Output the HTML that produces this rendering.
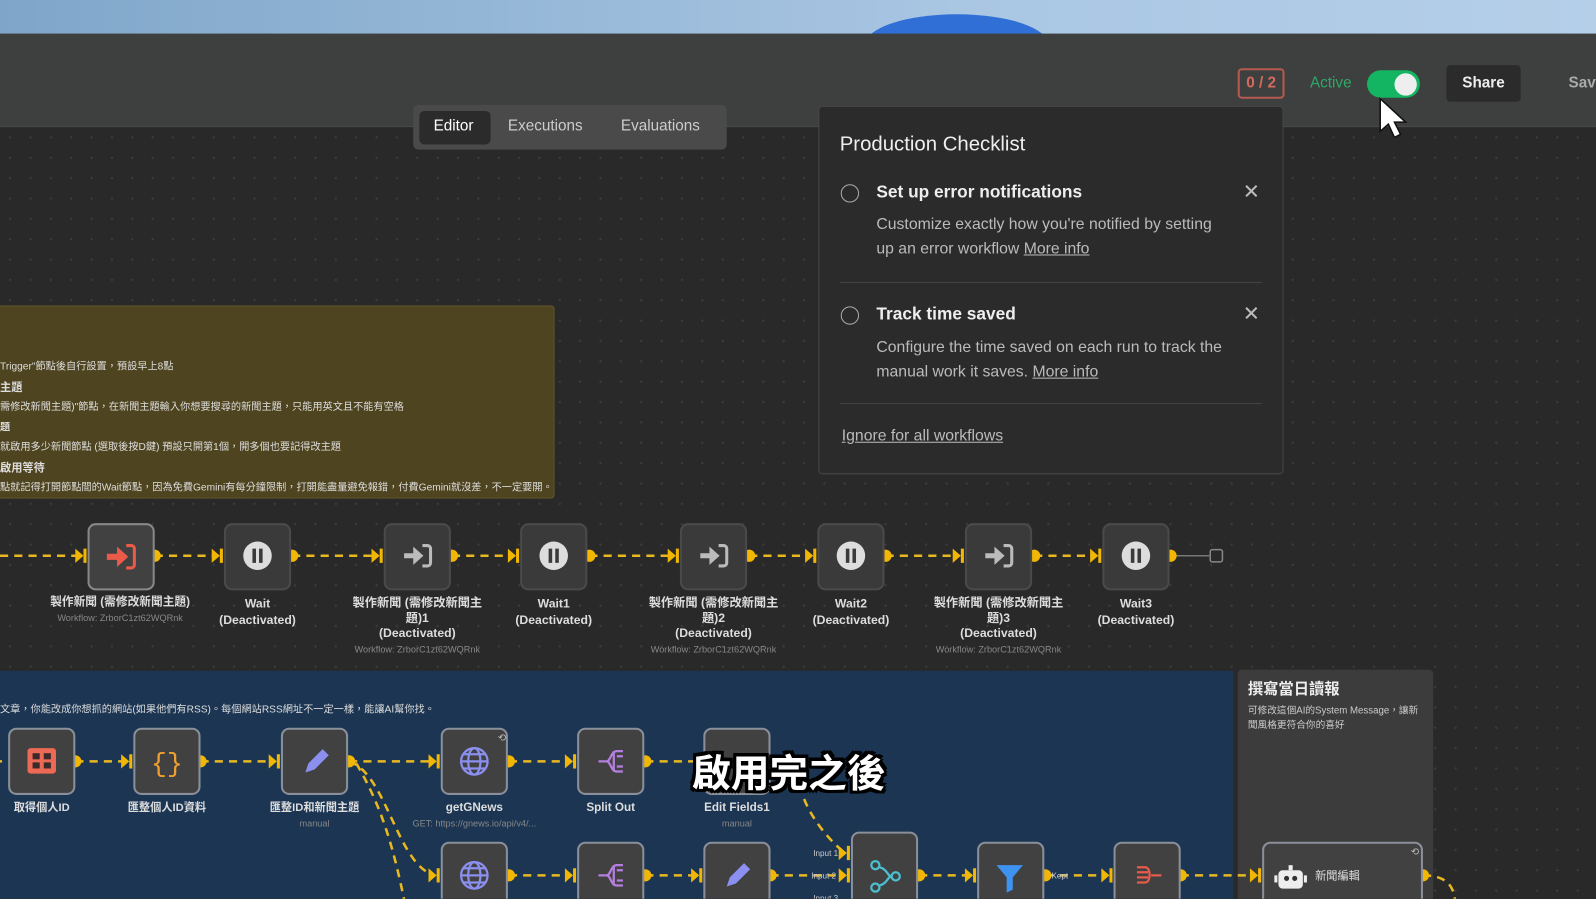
<!DOCTYPE html>
<html><head><meta charset="utf-8"><style>
*{margin:0;padding:0;box-sizing:border-box}
body{width:1596px;height:898px;overflow:hidden;background:#292929;font-family:"Liberation Sans","Noto Sans CJK TC",sans-serif;color:#ddd}
#w{position:absolute;left:0;top:0;width:1568px;height:883px;transform:scale(1.017857);transform-origin:0 0;overflow:hidden}
.abs{position:absolute}
.canvas{left:0;top:125px;width:1568px;height:760px;background-color:#292929;background-image:radial-gradient(#3c3c3c 1px,transparent 1.2px);background-size:20px 20px}
.node{position:absolute;width:66px;height:66px;background:#3a3a3a;border:2px solid #4a4a4a;border-radius:8px}
.nb{background:#414141;border:2px solid #8a8f99}
.lbl{position:absolute;width:170px;text-align:center;font-size:11.5px;color:#ddd;line-height:15px;font-weight:bold}
.sub{font-size:9px;color:#888;font-weight:normal}
.cn{font-size:10px;color:#ddd;line-height:20px;white-space:nowrap}
</style></head><body><div id="w">
<div class="abs" style="left:0;top:0;width:1568px;height:34px;background:linear-gradient(90deg,#7fa6c9,#a9c6e3 60%,#b5cfe9)"></div>
<div class="abs" style="left:850px;top:14px;width:180px;height:60px;border-radius:50%;background:#2f6fd6"></div>
<div class="abs" style="left:0;top:33px;width:1568px;height:92px;background:#3e3f3f;border-bottom:1px solid #4a4a4a"></div>
<div class="canvas abs"></div>

<div class="abs" style="left:406px;top:103px;width:308px;height:44px;background:#4a4a4a;border-radius:5px"></div>
<div class="abs" style="left:412px;top:109px;width:70px;height:33px;background:#2b2b2b;border-radius:5px"></div>
<div class="abs" style="left:426px;top:115px;font-size:15px;color:#fff">Editor</div>
<div class="abs" style="left:499px;top:115px;font-size:15px;color:#ccc">Executions</div>
<div class="abs" style="left:610px;top:115px;font-size:15px;color:#ccc">Evaluations</div>

<div class="abs" style="left:1216px;top:67px;width:46px;height:30px;border:2px solid #b55a50;border-radius:4px;color:#d56b5f;font-size:15px;font-weight:bold;text-align:center;line-height:26px">0 / 2</div>
<div class="abs" style="left:1287px;top:73px;font-size:15px;color:#2ea866">Active</div>
<div class="abs" style="left:1343px;top:69px;width:52px;height:27px;border-radius:14px;background:#13b562"></div>
<div class="abs" style="left:1370px;top:72px;width:22px;height:22px;border-radius:50%;background:#eee"></div>
<div class="abs" style="left:1421px;top:64px;width:73px;height:36px;border-radius:4px;background:#2b2b2b;color:#eee;font-size:15px;font-weight:bold;text-align:center;line-height:36px">Share</div>
<div class="abs" style="left:1541px;top:73px;font-size:15px;color:#aaa;font-weight:bold">Sav</div>

<div class="abs" style="left:0;top:300px;width:545px;height:190px;background:#4f4420;border:1px solid #665a2c;border-left:none;border-radius:0 4px 4px 0"></div>
<div class="abs cn" style="left:0;top:351px">Trigger"節點後自行設置，預設早上8點</div>
<div class="abs cn" style="left:0;top:371px;font-weight:bold;font-size:11px">主題</div>
<div class="abs cn" style="left:0;top:391px">需修改新聞主題)"節點，在新聞主題輸入你想要搜尋的新聞主題，只能用英文且不能有空格</div>
<div class="abs cn" style="left:0;top:411px;font-weight:bold">題</div>
<div class="abs cn" style="left:0;top:430px">就啟用多少新聞節點 (選取後按D鍵) 預設只開第1個，開多個也要記得改主題</div>
<div class="abs cn" style="left:0;top:450px;font-weight:bold;font-size:11px">啟用等待</div>
<div class="abs cn" style="left:0;top:470px">點就記得打開節點間的Wait節點，因為免費Gemini有每分鐘限制，打開能盡量避免報錯，付費Gemini就沒差，不一定要開。</div>

<div class="abs" style="left:0;top:659px;width:1212px;height:239px;background:#1b3552"></div>
<div class="abs cn" style="left:0;top:688px">文章，你能改成你想抓的網站(如果他們有RSS)。每個網站RSS網址不一定一樣，能讓AI幫你找。</div>
<div class="abs" style="left:1216px;top:658px;width:192px;height:240px;background:#3c3c3c;border-radius:4px"></div>
<div class="abs" style="left:1226px;top:666px;font-size:15px;font-weight:bold;color:#eee">撰寫當日讀報</div>
<div class="abs" style="left:1226px;top:692px;font-size:9.5px;color:#ccc;line-height:14px;width:176px">可修改這個AI的System Message，讓新聞風格更符合你的喜好</div>

<svg class="abs" style="left:0;top:0" width="1568" height="898">
<g stroke="#e8b820" stroke-width="2.5" stroke-dasharray="8 6" fill="none">
<path d="M0 546H80M152 546H214M287 546H371M444 546H505M579 546H662M736 546H797M870 546H942M1016 546H1077"/>
<path d="M0 748H2M74 748H125M197 748H270M343 748H427M500 748H561M634 748H685"/>
<path d="M343 748 C380 760,390 850,427 860"/>
<path d="M350 750 C380 800,390 850,400 898"/>
<path d="M500 860H561M634 860H685M757 860H830M903 860H954M1027 860H1088M1160 860H1234M1398 860C1430 860,1430 880,1430 898"/>
<path d="M790 785 C800 810,820 830,830 838"/>
</g>
<line x1="1150" y1="546" x2="1188" y2="546" stroke="#777" stroke-width="1.5"/>
<rect x="1189" y="540" width="12" height="12" rx="2" fill="none" stroke="#888" stroke-width="1.5"/>
<g fill="#f2b705">
<circle cx="152" cy="546" r="6"/><circle cx="287" cy="546" r="6"/><circle cx="444" cy="546" r="6"/><circle cx="579" cy="546" r="6"/><circle cx="736" cy="546" r="6"/><circle cx="870" cy="546" r="6"/><circle cx="1016" cy="546" r="6"/><circle cx="1150" cy="546" r="6"/>
<circle cx="74" cy="748" r="6"/><circle cx="197" cy="748" r="6"/><circle cx="343" cy="748" r="6"/><circle cx="500" cy="748" r="6"/><circle cx="634" cy="748" r="6"/>
<circle cx="500" cy="860" r="6"/><circle cx="634" cy="860" r="6"/><circle cx="757" cy="860" r="6"/><circle cx="903" cy="860" r="6"/><circle cx="1027" cy="860" r="6"/><circle cx="1160" cy="860" r="6"/><circle cx="1398" cy="860" r="6"/>
<path d="M74 539l8 7-8 7zM82 539h3v14h-3zM208 539l8 7-8 7zM216 539h3v14h-3zM365 539l8 7-8 7zM373 539h3v14h-3zM499 539l8 7-8 7zM507 539h3v14h-3zM656 539l8 7-8 7zM664 539h3v14h-3zM791 539l8 7-8 7zM799 539h3v14h-3zM936 539l8 7-8 7zM944 539h3v14h-3zM1071 539l8 7-8 7zM1079 539h3v14h-3z"/>
<path d="M119 741l8 7-8 7zM127 741h3v14h-3zM264 741l8 7-8 7zM272 741h3v14h-3zM421 741l8 7-8 7zM429 741h3v14h-3zM555 741l8 7-8 7zM563 741h3v14h-3z"/>
<path d="M421 853l8 7-8 7zM429 853h3v14h-3zM555 853l8 7-8 7zM563 853h3v14h-3zM679 853l8 7-8 7zM687 853h3v14h-3zM824 853l8 7-8 7zM832 853h3v14h-3zM948 853l8 7-8 7zM956 853h3v14h-3zM1082 853l8 7-8 7zM1090 853h3v14h-3zM1228 853l8 7-8 7zM1236 853h3v14h-3zM824 831l8 7-8 7zM832 831h3v14h-3z"/>
</g>
</svg>

<div class="node nb" style="left:86px;top:514px;border-color:#888"></div>
<svg class="abs" style="left:102px;top:531px" width="34" height="32" viewBox="0 0 34 32"><path d="M3 16h13" stroke="#ec5a4a" stroke-width="6"/><path d="M13 6l11 10-11 10z" fill="#ec5a4a"/><path d="M22 5h5a3 3 0 0 1 3 3v16a3 3 0 0 1-3 3h-5" stroke="#ec5a4a" stroke-width="3" fill="none"/></svg>
<div class="node" style="left:220px;top:514px"></div>
<div class="node" style="left:377px;top:514px"></div>
<div class="node" style="left:511px;top:514px"></div>
<div class="node" style="left:668px;top:514px"></div>
<div class="node" style="left:803px;top:514px"></div>
<div class="node" style="left:948px;top:514px"></div>
<div class="node" style="left:1083px;top:514px"></div>
<svg class="abs" style="left:0;top:0;pointer-events:none" width="1568" height="600">
<g fill="#ddd"><circle cx="253" cy="546" r="14"/><circle cx="544" cy="546" r="14"/><circle cx="836" cy="546" r="14"/><circle cx="1116" cy="546" r="14"/></g>
<g fill="#3a3a3a"><rect x="248" y="539" width="3.5" height="14"/><rect x="254.5" y="539" width="3.5" height="14"/><rect x="539" y="539" width="3.5" height="14"/><rect x="545.5" y="539" width="3.5" height="14"/><rect x="831" y="539" width="3.5" height="14"/><rect x="837.5" y="539" width="3.5" height="14"/><rect x="1111" y="539" width="3.5" height="14"/><rect x="1117.5" y="539" width="3.5" height="14"/></g>
<g fill="#bbb" stroke="#bbb">
<g transform="translate(394,531)"><path d="M3 15h12" stroke-width="5"/><path d="M12 6l10 9-10 9z" stroke="none"/><path d="M21 5h5a3 3 0 0 1 3 3v14a3 3 0 0 1-3 3h-5" stroke-width="3" fill="none"/></g>
<g transform="translate(685,531)"><path d="M3 15h12" stroke-width="5"/><path d="M12 6l10 9-10 9z" stroke="none"/><path d="M21 5h5a3 3 0 0 1 3 3v14a3 3 0 0 1-3 3h-5" stroke-width="3" fill="none"/></g>
<g transform="translate(965,531)"><path d="M3 15h12" stroke-width="5"/><path d="M12 6l10 9-10 9z" stroke="none"/><path d="M21 5h5a3 3 0 0 1 3 3v14a3 3 0 0 1-3 3h-5" stroke-width="3" fill="none"/></g>
</g></svg>
<div class="lbl" style="left:33px;top:585px">製作新聞 (需修改新聞主題)<br><span class="sub">Workflow: ZrborC1zt62WQRnk</span></div>
<div class="lbl" style="left:168px;top:585px;font-size:12px;line-height:16px">Wait<br>(Deactivated)</div>
<div class="lbl" style="left:325px;top:585px;font-size:12px;line-height:15px">製作新聞 (需修改新聞主<br>題)1<br>(Deactivated)<br><span class="sub">Workflow: ZrborC1zt62WQRnk</span></div>
<div class="lbl" style="left:459px;top:585px;font-size:12px;line-height:16px">Wait1<br>(Deactivated)</div>
<div class="lbl" style="left:616px;top:585px;font-size:12px;line-height:15px">製作新聞 (需修改新聞主<br>題)2<br>(Deactivated)<br><span class="sub">Workflow: ZrborC1zt62WQRnk</span></div>
<div class="lbl" style="left:751px;top:585px;font-size:12px;line-height:16px">Wait2<br>(Deactivated)</div>
<div class="lbl" style="left:896px;top:585px;font-size:12px;line-height:15px">製作新聞 (需修改新聞主<br>題)3<br>(Deactivated)<br><span class="sub">Workflow: ZrborC1zt62WQRnk</span></div>
<div class="lbl" style="left:1031px;top:585px;font-size:12px;line-height:16px">Wait3<br>(Deactivated)</div>

<div class="node nb" style="left:8px;top:715px"></div>
<div class="node nb" style="left:131px;top:715px"></div>
<div class="node nb" style="left:276px;top:715px"></div>
<div class="node nb" style="left:433px;top:715px"></div>
<div class="node nb" style="left:567px;top:715px"></div>
<div class="node nb" style="left:691px;top:715px"></div>
<div class="node nb" style="left:433px;top:827px"></div>
<div class="node nb" style="left:567px;top:827px"></div>
<div class="node nb" style="left:691px;top:827px"></div>
<div class="node nb" style="left:836px;top:817px;height:90px"></div>
<div class="node nb" style="left:960px;top:827px"></div>
<div class="node nb" style="left:1094px;top:827px"></div>
<div class="node nb" style="left:1240px;top:827px;width:158px"></div>
<svg class="abs" style="left:0;top:600px" width="1568" height="298">
<g transform="translate(27,135)"><rect width="28" height="25" rx="3" fill="#ec6a55"/><rect x="5" y="5" width="7" height="6" fill="#3a2a2a"/><rect x="16" y="5" width="7" height="6" fill="#3a2a2a"/><rect x="5" y="14" width="7" height="6" fill="#3a2a2a"/><rect x="16" y="14" width="7" height="6" fill="#3a2a2a"/></g>
<text x="164" y="158" font-size="26" fill="#f0a030" text-anchor="middle" font-family="Liberation Mono">{}</text>
<g transform="translate(296,135)"><path d="M4 24l3-9 14-14 6 6-14 14z" fill="#8b8ff0"/></g>
<g fill="none" stroke="#8b8ff0" stroke-width="2.2"><circle cx="466" cy="148" r="13"/><ellipse cx="466" cy="148" rx="6" ry="13"/><path d="M453 148h26M455 141h22M455 155h22"/>
<circle cx="466" cy="260" r="13"/><ellipse cx="466" cy="260" rx="6" ry="13"/><path d="M453 260h26M455 253h22M455 267h22"/></g>
<g fill="none" stroke="#b57fe0" stroke-width="2.2"><path d="M588 148h8M596 148c4 0 4-10 10-10h6M596 148c4 0 4 10 10 10h6M606 143h6M606 153h6M603 138v20"/>
<path d="M588 260h8M596 260c4 0 4-10 10-10h6M596 260c4 0 4 10 10 10h6M606 255h6M606 265h6M603 250v20"/></g>
<g transform="translate(710,247)"><path d="M4 24l3-9 14-14 6 6-14 14z" fill="#8b8ff0"/></g>
<g fill="none" stroke="#4cc0d0" stroke-width="2.2"><circle cx="860" cy="250" r="4"/><circle cx="860" cy="272" r="4"/><circle cx="880" cy="261" r="4"/><path d="M864 252c8 2 8 9 12 9M864 270c8-2 8-9 12-9"/></g>
<path d="M979 250h26l-10 12v12l-6 3v-15z" fill="#3e92f0"/>
<g fill="none" stroke="#e85a4a" stroke-width="2.2"><path d="M1117 252h8M1117 257h11M1117 262h11M1117 267h8M1125 252c6 0 6 15 0 15M1131 260h10"/></g>
<g transform="translate(1254,250)"><rect x="2" y="5" width="24" height="18" rx="4" fill="#eee"/><circle cx="10" cy="13" r="2.5" fill="#333"/><circle cx="18" cy="13" r="2.5" fill="#333"/><rect x="12" y="0" width="4" height="5" fill="#eee"/><rect x="-2" y="10" width="3" height="7" fill="#eee"/><rect x="27" y="10" width="3" height="7" fill="#eee"/></g>
<text x="1292" y="264" font-size="11" fill="#ddd" font-family="Liberation Sans,Noto Sans CJK TC">新聞編輯</text>
<text x="489" y="128" font-size="10" fill="#bbb">⟲</text>
<text x="1386" y="240" font-size="10" fill="#bbb">⟲</text>
<g font-size="8" fill="#ccc" font-family="Liberation Sans"><text x="799" y="241">Input 1</text><text x="797" y="263">Input 2</text><text x="799" y="285">Input 3</text><text x="1033" y="263">Kept</text></g>
</svg>
<div class="lbl" style="left:-44px;top:787px;font-size:11px">取得個人ID</div>
<div class="lbl" style="left:79px;top:787px;font-size:11px">匯整個人ID資料</div>
<div class="lbl" style="left:224px;top:787px;font-size:11px">匯整ID和新聞主題<br><span class="sub">manual</span></div>
<div class="lbl" style="left:381px;top:787px;font-size:11.5px">getGNews<br><span class="sub">GET: https://gnews.io/api/v4/...</span></div>
<div class="lbl" style="left:515px;top:787px;font-size:11.5px">Split Out</div>
<div class="lbl" style="left:639px;top:787px;font-size:11.5px">Edit Fields1<br><span class="sub">manual</span></div>

<div class="abs" style="left:680px;top:732px;font-size:38px;font-weight:bold;color:#fff;font-family:'Noto Sans CJK TC',sans-serif;text-shadow:-3px -3px 0 #000,3px -3px 0 #000,-3px 3px 0 #000,3px 3px 0 #000,0 3px 0 #000,3px 0 0 #000,0 -3px 0 #000,-3px 0 0 #000;line-height:50px">啟用完之後</div>

<div class="abs" style="left:804px;top:104px;width:457px;height:362px;background:#2b2b2b;border:1px solid #474747;border-radius:4px"></div>
<div class="abs" style="left:825px;top:131px;font-size:20px;color:#eee">Production Checklist</div>
<div class="abs" style="left:826px;top:181px;width:18px;height:18px;border:1.5px solid #aaa;border-radius:50%"></div>
<div class="abs" style="left:861px;top:179px;font-size:17px;font-weight:bold;color:#eee">Set up error notifications</div>
<div class="abs" style="left:1221px;top:176px;font-size:20px;color:#bbb">✕</div>
<div class="abs" style="left:861px;top:209px;font-size:15.5px;color:#bbb;line-height:24px;width:346px">Customize exactly how you're notified by setting up an error workflow <u>More info</u></div>
<div class="abs" style="left:825px;top:277px;width:415px;height:1px;background:#444"></div>
<div class="abs" style="left:826px;top:301px;width:18px;height:18px;border:1.5px solid #aaa;border-radius:50%"></div>
<div class="abs" style="left:861px;top:299px;font-size:17px;font-weight:bold;color:#eee">Track time saved</div>
<div class="abs" style="left:1221px;top:296px;font-size:20px;color:#bbb">✕</div>
<div class="abs" style="left:861px;top:330px;font-size:15.5px;color:#bbb;line-height:24px;width:365px">Configure the time saved on each run to track the manual work it saves. <u>More info</u></div>
<div class="abs" style="left:825px;top:396px;width:415px;height:1px;background:#444"></div>
<div class="abs" style="left:827px;top:420px;font-size:15.5px;color:#bbb"><u>Ignore for all workflows</u></div>

<svg class="abs" style="left:1353px;top:95px" width="36" height="44"><path d="M3 2v32l8-7 6 13 6-3-6-12h11z" fill="#fff" stroke="#111" stroke-width="1.5"/></svg>
</div></body></html>
